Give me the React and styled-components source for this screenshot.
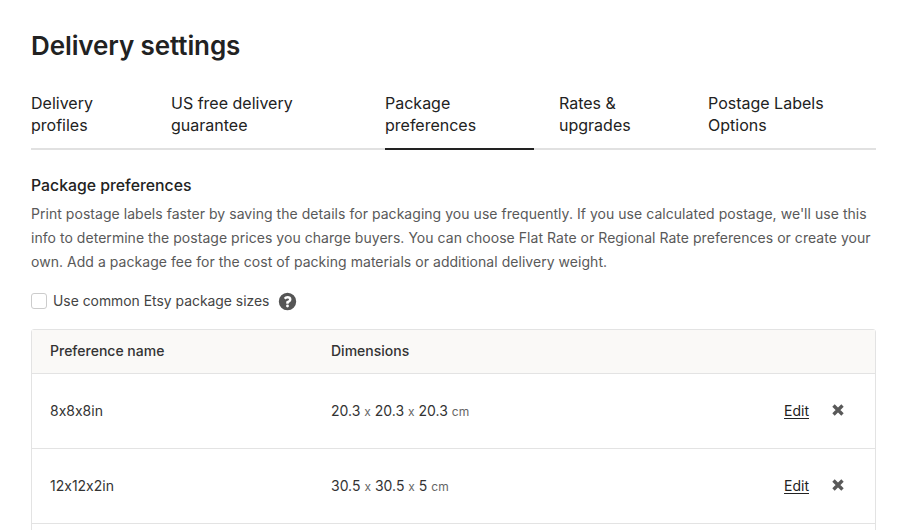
import React from 'react';
import styled, { createGlobalStyle } from 'styled-components';

const GlobalStyle = createGlobalStyle`
	html, body {
		margin: 0;
		height: 530px;
		overflow: hidden;
		background: #fff;
	}
	body {
		font-family: Inter, "Liberation Sans", sans-serif;
		font-feature-settings: "calt" 0;
		color: #222;
	}
`;

const Page = styled.div`
	padding: 27px 37px 0 31px;
`;

const Title = styled.h1`
	margin: 0 0 27px 0;
	font-size: 26px;
	line-height: 38px;
	font-weight: 600;
	letter-spacing: -0.1px;
	color: #222;
`;

const Tabs = styled.div`
	display: flex;
	gap: 25px;
	border-bottom: 2px solid #e1e1e1;
`;

const Tab = styled.div`
	width: ${(p) => p.$width}px;
	height: 54px;
	margin-bottom: -2px;
	padding-bottom: 2px;
	font-size: 16px;
	line-height: 22px;
	color: #222;
	border-bottom: 2px solid ${(p) => (p.$active ? '#222' : 'transparent')};
`;

const Section = styled.div`
	padding-top: 26px;
`;

const SectionTitle = styled.h2`
	margin: 0;
	font-size: 15.8px;
	line-height: 20px;
	font-weight: 500;
	color: #222;
`;

const Description = styled.p`
	margin: 6px 0 0 0;
	font-size: 14px;
	line-height: 24px;
	letter-spacing: 0.04px;
	color: #595959;
`;

const CheckRow = styled.label`
	display: flex;
	align-items: center;
	margin-top: 15px;
	height: 24px;
	font-size: 13.9px;
	color: #444;
`;

const Box = styled.span`
	width: 14px;
	height: 14px;
	border: 1px solid #ccc;
	border-radius: 3px;
	margin-right: 6px;
	background: #fff;
`;

const Help = styled.svg`
	width: 19px;
	height: 19px;
	margin-left: 9px;
	fill: #555;
`;

const Table = styled.div`
	margin-top: 16px;
	border: 1px solid #e3e3e3;
	border-radius: 3px;
`;

const Row = styled.div`
	display: grid;
	grid-template-columns: 281px 1fr auto 66px;
	align-items: center;
	height: ${(p) => (p.$head ? 41 : 72)}px;
	padding: 0 0 2px 18px;
	background: ${(p) => (p.$head ? '#faf9f7' : '#fff')};
	border-bottom: 1px solid #e3e3e3;
	font-size: 14px;
	font-weight: ${(p) => (p.$head ? 500 : 400)};
	color: #333;
`;

const Small = styled.span`
	font-size: 12px;
	color: #666;
`;

const EditLink = styled.a`
	color: #222;
	text-decoration: underline;
	text-underline-offset: 2px;
`;

const CloseWrap = styled.span`
	display: flex;
	justify-content: flex-end;
	padding: 0 31px 1px 0;
`;

const CloseIcon = styled.svg`
	width: 12px;
	height: 12px;
	stroke: #595959;
	stroke-width: 3.4;
	fill: none;
`;

const tabs = [
	{ label: 'Delivery profiles', width: 115 },
	{ label: 'US free delivery guarantee', width: 189 },
	{ label: 'Package preferences', width: 149, active: true },
	{ label: 'Rates & upgrades', width: 124 },
	{ label: 'Postage Labels Options', width: 168 },
];

const rows = [
	{ name: '8x8x8in', dims: ['20.3', '20.3', '20.3'] },
	{ name: '12x12x2in', dims: ['30.5', '30.5', '5'] },
	{ name: '', dims: null },
];

const Dimensions = ({ dims }) => (
	<span>
		{dims[0]} <Small>x</Small> {dims[1]} <Small>x</Small> {dims[2]} <Small>cm</Small>
	</span>
);

export default function App() {
	return (
		<Page>
			<GlobalStyle />
			<Title>Delivery settings</Title>
			<Tabs>
				{tabs.map((t) => (
					<Tab key={t.label} $width={t.width} $active={t.active}>
						{t.label}
					</Tab>
				))}
			</Tabs>
			<Section>
				<SectionTitle>Package preferences</SectionTitle>
				<Description>
					Print postage labels faster by saving the details for packaging you use frequently. If you use calculated
					postage, we'll use this info to determine the postage prices you charge buyers. You can choose Flat Rate or
					Regional Rate preferences or create your own. Add a package fee for the cost of packing materials or
					additional delivery weight.
				</Description>
				<CheckRow>
					<Box />
					Use common Etsy package sizes
					<Help viewBox="0 0 24 24">
						<path d="M12 1a11 11 0 1 0 0 22 11 11 0 0 0 0-22zm0 18.500a1.800 1.800 0 1 1 0-3.600 1.800 1.800 0 0 1 0 3.600zm1.600-5.600v.9h-3.200v-2.200c0-.9.7-1.500 1.600-1.600 1.100-.1 1.900-.6 1.900-1.500 0-.9-.8-1.400-1.800-1.400-1 0-1.900.5-2.500 1.300L7.400 7.700C8.400 6.200 10 5.200 12.200 5.200c2.600 0 4.800 1.500 4.800 4.100 0 2.400-1.500 3.900-3.400 4.600z" />
					</Help>
				</CheckRow>
				<Table>
					<Row $head>
						<span>Preference name</span>
						<span>Dimensions</span>
					</Row>
					{rows.map((r, i) => (
						<Row key={i}>
							<span>{r.name}</span>
							{r.dims ? <Dimensions dims={r.dims} /> : <span />}
							{r.dims ? <EditLink>Edit</EditLink> : <span />}
							{r.dims ? (
								<CloseWrap>
									<CloseIcon viewBox="0 0 12 12">
										<path d="M1.500 1.500l9 9M10.500 1.500l-9 9" />
									</CloseIcon>
								</CloseWrap>
							) : (
								<span />
							)}
						</Row>
					))}
				</Table>
			</Section>
		</Page>
	);
}
